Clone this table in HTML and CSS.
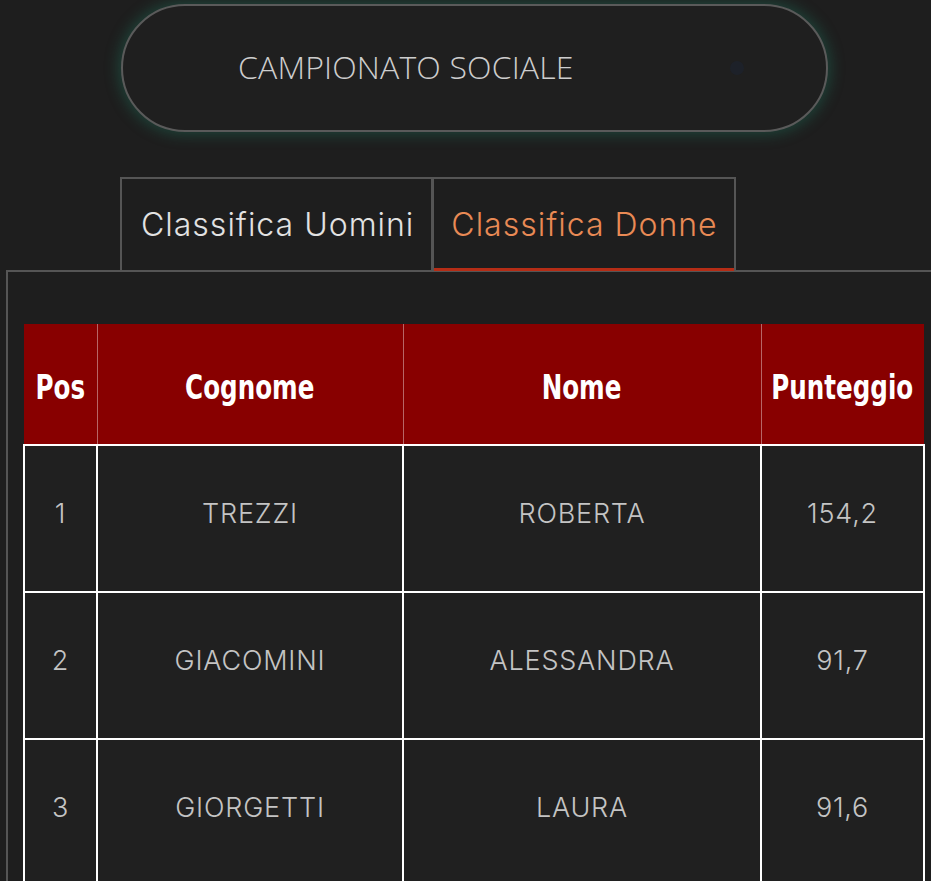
FILE: index.html
```html
<!DOCTYPE html>
<html lang="it">
<head>
<meta charset="utf-8">
<title>Campionato Sociale</title>
<link rel="stylesheet" href="styles.css">
</head>
<body>
<header class="top">
  <div class="pill">
    <span class="pill-title">CAMPIONATO SOCIALE</span>
    <span class="pill-caret"></span>
  </div>
</header>
<nav class="tabs">
  <div class="tab">Classifica Uomini</div>
  <div class="tab tab-active">Classifica Donne</div>
</nav>
<section class="panel">
  <table class="rank">
    <colgroup>
      <col class="c-pos"><col class="c-cog"><col class="c-nome"><col class="c-pt">
    </colgroup>
    <thead>
      <tr>
        <th><span class="hd">Pos</span></th>
        <th><span class="hd">Cognome</span></th>
        <th><span class="hd">Nome</span></th>
        <th><span class="hd">Punteggio</span></th>
      </tr>
    </thead>
    <tbody>
      <tr><td>1</td><td>TREZZI</td><td>ROBERTA</td><td>154,2</td></tr>
      <tr><td>2</td><td>GIACOMINI</td><td>ALESSANDRA</td><td>91,7</td></tr>
      <tr><td>3</td><td>GIORGETTI</td><td>LAURA</td><td>91,6</td></tr>
    </tbody>
  </table>
</section>
</body>
</html>
```
FILE: styles.css
```css
html, body {
  margin: 0;
  padding: 0;
  background: #1e1e1e;
  overflow: hidden;
  height: 881px;
}

.top {
  padding-top: 4px;
  padding-left: 121px;
}

.pill {
  box-sizing: border-box;
  width: 707px;
  height: 128px;
  border: 2px solid #5a5a5a;
  border-radius: 64px;
  background: #1f1f1f;
  box-shadow: 0 0 14px 3px rgba(30, 120, 95, 0.4);
  display: flex;
  align-items: center;
  padding-left: 115px;
  padding-right: 82px;
  justify-content: space-between;
}

.pill-title {
  font-family: "Open Sans", "Noto Sans", sans-serif;
  font-weight: 300;
  font-size: 32px;
  letter-spacing: 0.15px;
  color: #cdcdcd;
  margin-top: -3px;
}

.pill-caret {
  width: 14px;
  height: 14px;
  border-radius: 50%;
  background: #1d2330;
  opacity: 0.6;
}

.tabs {
  display: flex;
  margin-top: 45px;
  padding-left: 120px;
}

.tab {
  box-sizing: border-box;
  height: 93px;
  border: 2px solid #555;
  border-bottom: none;
  padding: 0 17px 0 19px;
  display: flex;
  align-items: center;
  font-family: Inter, "Noto Sans", sans-serif;
  font-weight: 300;
  font-size: 32px;
  letter-spacing: 1px;
  color: #e2e2e2;
  position: relative;
}

.tab + .tab {
  margin-left: -1px;
  padding: 0 16px 0 17px;
}

.tab-active {
  color: #e98a55;
}

.tab-active::after {
  content: "";
  position: absolute;
  left: 0;
  right: 0;
  bottom: -1px;
  height: 3px;
  background: #b52d16;
}

.panel {
  margin-left: 6px;
  width: 960px;
  border-top: 2px solid #555;
  border-left: 2px solid #555;
  padding: 52px 0 0 15px;
  box-sizing: border-box;
}

.rank {
  border-collapse: collapse;
  table-layout: fixed;
  width: 900px;
}

.c-pos { width: 73px; }
.c-cog { width: 306px; }
.c-nome { width: 358px; }
.c-pt { width: 163px; }

.rank th {
  height: 114px;
  padding: 6px 0 0 0;
  background: #880000;
  color: #ffffff;
  font-family: "DejaVu Sans", "Liberation Sans", sans-serif;
  font-weight: 700;
  font-size: 33px;
  text-align: center;
  white-space: nowrap;
  border-left: 1px solid rgba(255, 255, 255, 0.4);
  border-bottom: 2px solid #ffffff;
}

.rank th:first-child {
  border-left: none;
}

.hd {
  display: inline-block;
  margin: 0 -40px;
  transform: scaleX(0.745);
}

.rank td {
  height: 135px;
  padding: 0 0 10px 0;
  background: #202020;
  border: 2px solid #ffffff;
  text-align: center;
  font-family: Inter, "Noto Sans", sans-serif;
  font-weight: 300;
  font-size: 27px;
  letter-spacing: 0.8px;
  color: #c4c4c4;
}
```
